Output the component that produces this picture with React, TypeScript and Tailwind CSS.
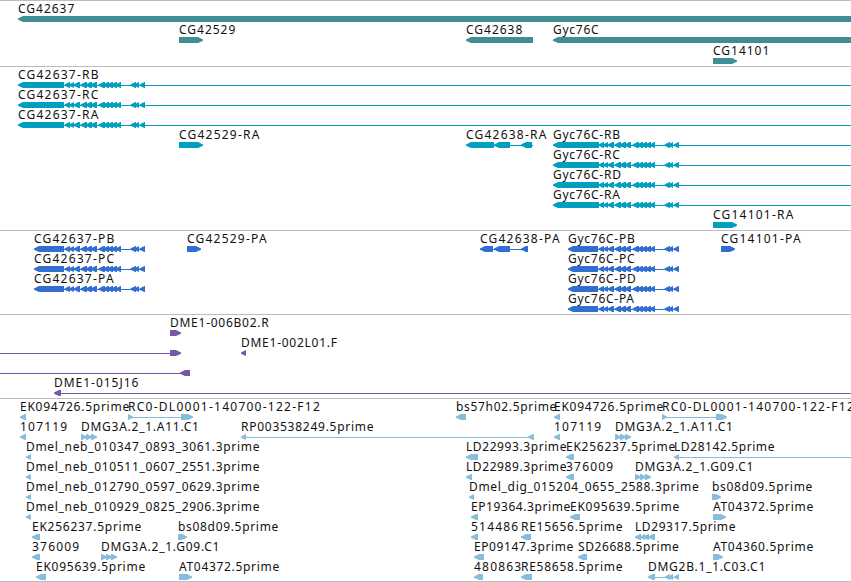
import type { FC } from "react";

type Direction = "left" | "right";

// [start, end, direction]
type Exon = [number, number, Direction];

interface Feature {
  name?: string;
  exons: Exon[];
  // intron line drawn behind the exons
  line?: [number, number];
}

interface TrackData {
  id: string;
  color: string;
  rowClass: string;
  trackClass: string;
  rows: Feature[][];
}

const WIDTH = 851;

const left = (start: number, end: number): Exon => [start, end, "left"];
const right = (start: number, end: number): Exon => [start, end, "right"];

const smallExons = (offset: number): Exon[] => [
  left(64.5 + offset, 70 + offset),
  left(69 + offset, 74 + offset),
  left(73.5 + offset, 80 + offset),
  left(80.5 + offset, 87 + offset),
  left(85.5 + offset, 92 + offset),
  left(90.5 + offset, 97 + offset),
  left(98.5 + offset, 105 + offset),
  left(103 + offset, 109 + offset),
  left(107 + offset, 113 + offset),
  left(111 + offset, 117 + offset),
  left(115.5 + offset, 121 + offset),
  left(130.5 + offset, 136 + offset),
  left(134 + offset, 139 + offset),
  left(139.5 + offset, 145 + offset),
];

const transcript = (
  name: string,
  start: number,
  end: number,
  offset: number,
  lineEnd: number
): Feature => ({
  name,
  exons: [left(start, end), ...smallExons(offset)],
  line: [end, lineEnd],
});

const single = (name: string, exon: Exon): Feature => ({
  name,
  exons: [exon],
});

const triple = (name: string, start: number): Feature => ({
  name,
  exons: [
    right(start, start + 6),
    right(start + 5, start + 11),
    right(start + 10, start + 16),
  ],
});

const tracks: TrackData[] = [
  {
    id: "genes",
    color: "#3f8e94",
    rowClass: "h-[21px]",
    trackClass: "pt-px pb-px",
    rows: [
      [single("CG42637", left(18, 860))],
      [
        single("CG42529", right(179, 203)),
        single("CG42638", left(466, 533)),
        single("Gyc76C", left(553, 860)),
      ],
      [single("CG14101", right(713, 737))],
    ],
  },
  {
    id: "transcripts",
    color: "#009ebf",
    rowClass: "h-5",
    trackClass: "pt-px pb-0.5",
    rows: [
      [transcript("CG42637-RB", 18, 64, 0, WIDTH)],
      [transcript("CG42637-RC", 18, 64, 0, WIDTH)],
      [transcript("CG42637-RA", 18, 64, 0, WIDTH)],
      [
        single("CG42529-RA", right(179, 203)),
        {
          name: "CG42638-RA",
          exons: [left(466, 494), left(494, 510), left(521, 532)],
          line: [494, 533],
        },
        transcript("Gyc76C-RB", 553, 599, 534, WIDTH),
      ],
      [transcript("Gyc76C-RC", 553, 599, 534, WIDTH)],
      [transcript("Gyc76C-RD", 553, 599, 534, WIDTH)],
      [transcript("Gyc76C-RA", 553, 599, 534, WIDTH)],
      [single("CG14101-RA", right(713, 737))],
    ],
  },
  {
    id: "proteins",
    color: "#316ecf",
    rowClass: "h-5",
    trackClass: "pt-px pb-0.5",
    rows: [
      [
        transcript("CG42637-PB", 34, 64, 0, 145),
        single("CG42529-PA", right(187, 201)),
        {
          name: "CG42638-PA",
          exons: [left(480, 493), left(494, 510), left(521, 528)],
          line: [493, 528],
        },
        transcript("Gyc76C-PB", 568, 598, 534, 679),
        single("CG14101-PA", right(721, 735)),
      ],
      [
        transcript("CG42637-PC", 34, 64, 0, 145),
        transcript("Gyc76C-PC", 568, 598, 534, 679),
      ],
      [
        transcript("CG42637-PA", 34, 64, 0, 145),
        transcript("Gyc76C-PD", 568, 598, 534, 679),
      ],
      [transcript("Gyc76C-PA", 568, 598, 534, 679)],
    ],
  },
  {
    id: "bacs",
    color: "#7659a8",
    rowClass: "h-5",
    trackClass: "pt-px pb-0.5",
    rows: [
      [single("DME1-006B02.R", right(170, 181))],
      [
        { exons: [right(170, 181)], line: [0, 170] },
        single("DME1-002L01.F", left(241, 246)),
      ],
      [{ exons: [left(180, 190)], line: [0, 181] }],
      [{ name: "DME1-015J16", exons: [left(54, 61)], line: [61, WIDTH] }],
    ],
  },
  {
    id: "ests",
    color: "#86bddd",
    rowClass: "h-5",
    trackClass: "pt-px pb-px",
    rows: [
      [
        single("EK094726.5prime", left(20, 26)),
        {
          name: "RC0-DL0001-140700-122-F12",
          exons: [right(128, 133), right(181, 193)],
          line: [133, 181],
        },
        single("bs57h02.5prime", left(456, 466)),
        single("EK094726.5prime", left(554, 560)),
        {
          name: "RC0-DL0001-140700-122-F12",
          exons: [right(662, 667), right(716, 727)],
          line: [667, 716],
        },
      ],
      [
        single("107119", left(20, 26)),
        triple("DMG3A.2_1.A11.C1", 81),
        {
          name: "RP003538249.5prime",
          exons: [left(241, 246), left(528, 534)],
          line: [246, 530],
        },
        single("107119", left(554, 560)),
        triple("DMG3A.2_1.A11.C1", 615),
      ],
      [
        single("Dmel_neb_010347_0893_3061.3prime", left(26, 31)),
        single("LD22993.3prime", left(466, 478)),
        single("EK256237.5prime", left(566, 574)),
        { name: "LD28142.5prime", exons: [left(674, 679)], line: [679, WIDTH] },
      ],
      [
        single("Dmel_neb_010511_0607_2551.3prime", left(26, 31)),
        single("LD22989.3prime", left(466, 472)),
        single("376009", left(566, 574)),
        triple("DMG3A.2_1.G09.C1", 635),
      ],
      [
        single("Dmel_neb_012790_0597_0629.3prime", left(26, 31)),
        single("Dmel_dig_015204_0655_2588.3prime", left(469, 474)),
        single("bs08d09.5prime", right(712, 721)),
      ],
      [
        single("Dmel_neb_010929_0825_2906.3prime", left(26, 31)),
        single("EP19364.3prime", left(471, 478)),
        single("EK095639.5prime", left(570, 580)),
        single("AT04372.5prime", right(713, 726)),
      ],
      [
        single("EK256237.5prime", left(32, 40)),
        single("bs08d09.5prime", right(178, 187)),
        single("514486", left(471, 478)),
        single("RE15656.5prime", left(521, 531)),
        {
          name: "LD29317.5prime",
          exons: [left(635, 641), left(640, 645), left(643, 649), left(648, 655)],
        },
      ],
      [
        single("376009", left(32, 40)),
        triple("DMG3A.2_1.G09.C1", 101),
        single("EP09147.3prime", left(474, 484)),
        single("SD26688.5prime", left(578, 587)),
        single("AT04360.5prime", right(713, 723)),
      ],
      [
        single("EK095639.5prime", left(36, 46)),
        single("AT04372.5prime", right(179, 192)),
        single("480863", left(474, 483)),
        single("RE58658.5prime", left(521, 532)),
        {
          name: "DMG2B.1_1.C03.C1",
          exons: [left(648, 655), left(665, 670), left(668, 673), left(674, 679)],
          line: [655, 679],
        },
      ],
    ],
  },
];

const getSpacing = (name: string) => {
  if (/^RC0/.test(name)) return 1.26;
  if (/^\d+$/.test(name)) return 1.2;
  if (/^CG\d+-/.test(name)) return 1.22;
  if (/^CG/.test(name)) return 0.98;
  if (/^DME1.*J/.test(name)) return 0.97;
  if (/^(LD|SD|EP)/.test(name)) return 0.58;
  if (/^(Dmel|AT|bs)/.test(name)) return 0.68;
  return 0.74;
};

// blunt arrow head, 6px tall
const exonPoints = ([start, end, direction]: Exon) => {
  const head = Math.min(5, end - start);
  return direction === "left"
    ? `${start},2.4 ${start + head},0 ${end},0 ${end},6 ${start + head},6 ${start},3.8`
    : `${end},2.4 ${end - head},0 ${start},0 ${start},6 ${end - head},6 ${end},3.8`;
};

const Row: FC<{ features: Feature[]; color: string; className: string }> = ({
  features,
  color,
  className,
}) => (
  <div className={className}>
    <div className="relative z-10 h-3.5">
      {features.map(({ name, exons }) =>
        name ? (
          <span
            key={`${name}-${exons[0][0]}`}
            className="absolute top-0 whitespace-nowrap"
            style={{ left: exons[0][0], letterSpacing: getSpacing(name) }}
          >
            {name}
          </span>
        ) : null
      )}
    </div>
    <svg className="block h-1.5 w-[851px]" viewBox="0 0 851 6" fill={color}>
      {features.map((feature, i) => (
        <g key={i}>
          {feature.line && (
            <rect
              x={feature.line[0]}
              y={3}
              width={feature.line[1] - feature.line[0]}
              height={1}
            />
          )}
          {feature.exons.map((exon) => (
            <polygon key={exon[0]} points={exonPoints(exon)} />
          ))}
        </g>
      ))}
    </svg>
  </div>
);

const Track: FC<{ track: TrackData }> = ({ track }) => (
  <section className={`border-t border-[#bdbdbd] ${track.trackClass}`}>
    {track.rows.map((features, i) => (
      <Row
        key={i}
        features={features}
        color={track.color}
        className={track.rowClass}
      />
    ))}
  </section>
);

export default function App() {
  return (
    <main className="h-[582px] w-[851px] overflow-hidden bg-white font-['Noto_Sans',sans-serif] text-[12px] leading-[14px] text-[#111]">
      {tracks.map((track) => (
        <Track key={track.id} track={track} />
      ))}
      <div className="h-px bg-[#bdbdbd]" />
    </main>
  );
}
